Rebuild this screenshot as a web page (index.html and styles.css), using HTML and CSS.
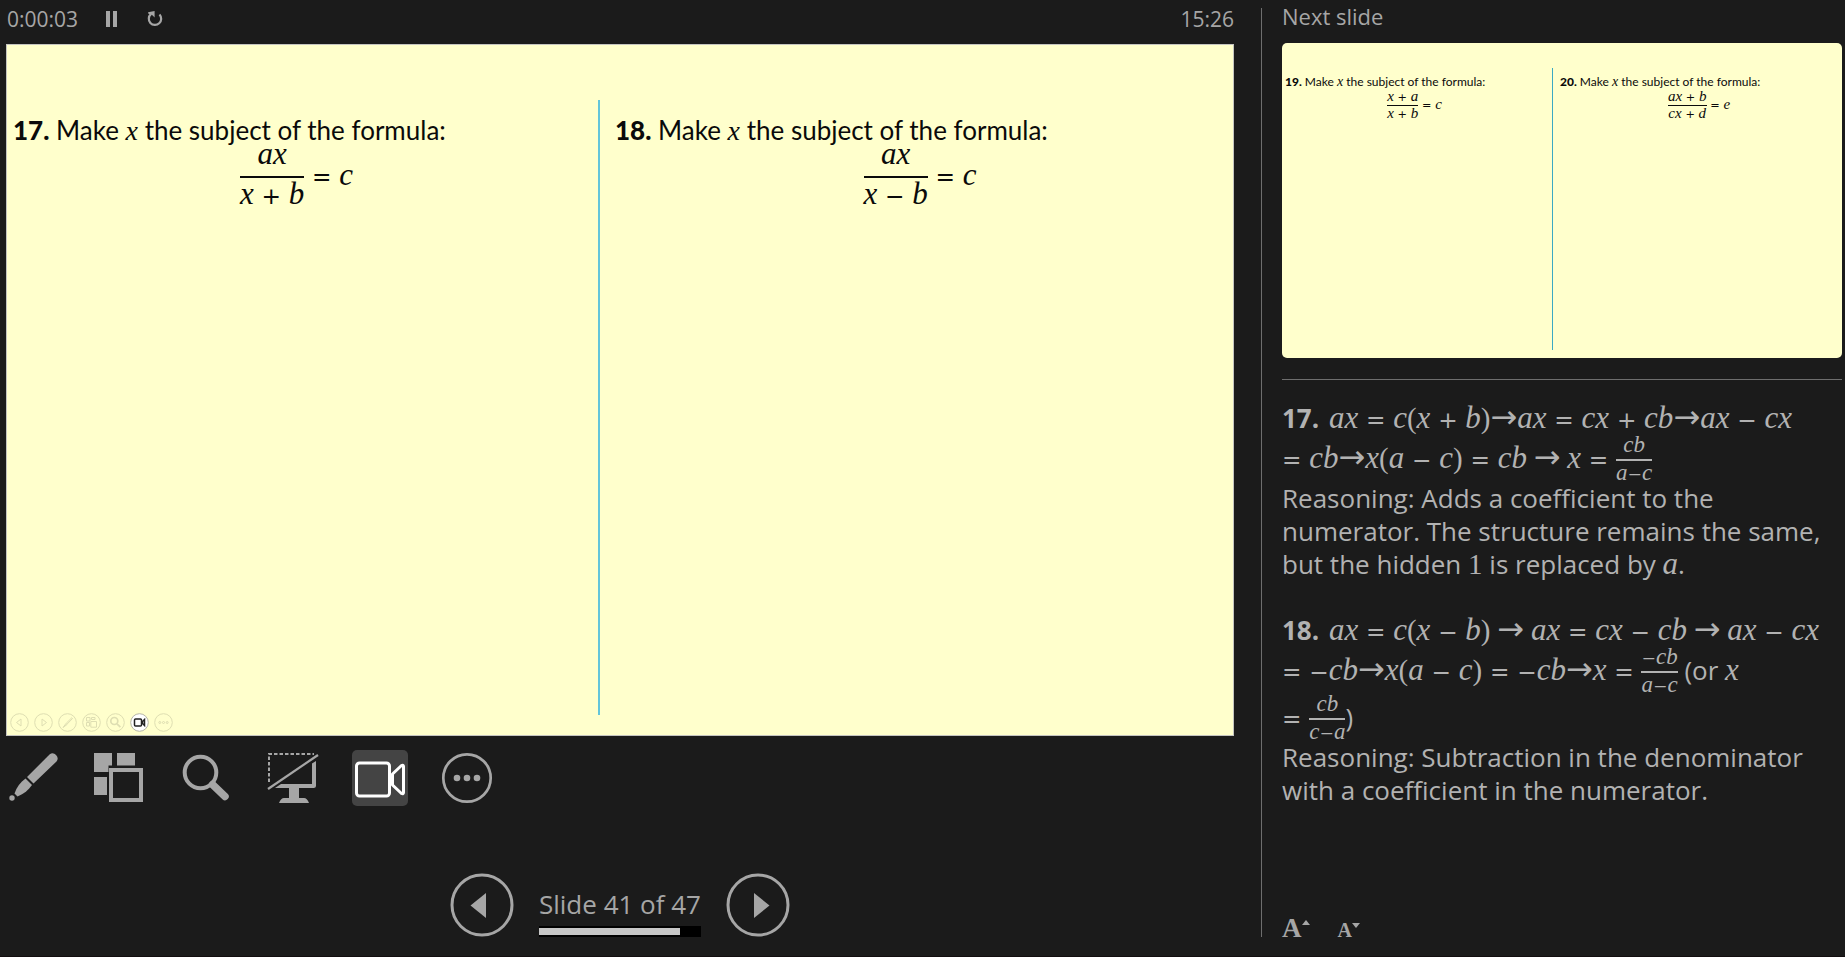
FILE: index.html
```html
<!DOCTYPE html>
<html lang="en">
<head>
<meta charset="utf-8">
<title>Presenter view</title>
<link rel="stylesheet" href="styles.css">
</head>
<body>
<div class="presenter">
  <main class="stage">
    <header class="timer-bar">
      <span class="timer">0:00:03</span>
      <button class="timer-btn" aria-label="Pause timer"><svg width="16" height="18" viewBox="0 0 16 18"><path d="M2 1h4v16H2zM9 1h4v16H9z" fill="#a6a6a6"/></svg></button>
      <button class="timer-btn" aria-label="Restart timer"><svg width="18" height="18" viewBox="0 0 18 18"><path d="M13.500 4.500a6.200 6.200 0 1 1-8.600-.4" fill="none" stroke="#a6a6a6" stroke-width="2.200"/><path d="M2 2.200 8.600 1v6.600L6.400 5.200 2.600 4z" fill="#a6a6a6"/></svg></button>
      <time class="clock">15:26</time>
    </header>

    <section class="slide" aria-label="Current slide">
      <div class="question">
        <p class="prompt"><b>17.</b> Make <i>x</i> the subject of the formula:</p>
        <p class="equation"><span class="frac"><span class="num">ax</span><span class="den">x <em>+</em> b</span></span> <em>=</em> c</p>
      </div>
      <div class="question second">
        <p class="prompt"><b>18.</b> Make <i>x</i> the subject of the formula:</p>
        <p class="equation"><span class="frac"><span class="num">ax</span><span class="den">x <em>−</em> b</span></span> <em>=</em> c</p>
      </div>
      <div class="slide-controls">
        <button aria-label="Previous"><svg viewBox="0 0 19 19"><circle cx="9.500" cy="9.500" r="8.800"/><path d="M11 6v7L6.500 9.500z"/></svg></button>
        <button aria-label="Next"><svg viewBox="0 0 19 19"><circle cx="9.500" cy="9.500" r="8.800"/><path d="M8 6v7l4.500-3.500z"/></svg></button>
        <button aria-label="Pen"><svg viewBox="0 0 19 19"><circle cx="9.500" cy="9.500" r="8.800"/><path d="M14 4.500 8.200 10.300M14.800 5.200 9 11.200M8 10.500l1 1-4 3z"/></svg></button>
        <button aria-label="All slides"><svg viewBox="0 0 19 19"><circle cx="9.500" cy="9.500" r="8.800"/><path d="M4.500 4.500h3.500v3.500h-3.500zM9.500 4.500h3.500v2h-3.500zM4.500 9.500h3v3.500h-3zM8.800 8.500h5.700v5.700h-5.700z"/></svg></button>
        <button aria-label="Zoom"><svg viewBox="0 0 19 19"><circle cx="9.500" cy="9.500" r="8.800"/><g stroke-width="1.700"><circle cx="8.300" cy="8" r="3.500"/><path d="m11 10.800 3.400 3.400"/></g></svg></button>
        <button class="on" aria-label="Camera"><svg viewBox="0 0 19 19"><circle cx="9.500" cy="9.500" r="8.800"/><g><rect x="4.500" y="6" width="7" height="7" rx="1"/><path d="M12.500 8.500 14.500 6.500v6L12.500 10.500z"/></g></svg></button>
        <button aria-label="More"><svg viewBox="0 0 19 19"><circle cx="9.500" cy="9.500" r="8.800"/><circle cx="5.800" cy="9.500" r="1"/><circle cx="9.500" cy="9.500" r="1"/><circle cx="13.200" cy="9.500" r="1"/></svg></button>
      </div>
    </section>

    <div class="tools">
      <button class="tool" aria-label="Pen and laser pointer tools"><svg viewBox="0 0 56 56"><g fill="#a6a6a6"><path d="M45.500 4.500a5 5 0 0 1 7 7L29.500 33.500 23 27z"/><path d="M21.500 28.500 28 35c-3.500 5-8 9-14.500 11.500L10.500 43.500C12.500 37 16.500 32 21.500 28.500z"/><circle cx="8" cy="48" r="2.700"/></g></svg></button>
      <button class="tool" aria-label="See all slides"><svg viewBox="0 0 56 56"><path d="M3 3h18v12.500h-3.500V22H3zM26 3h18v12.500H26zM3 27h13v18H3z" fill="#a6a6a6"/><path d="M20 20h30v30H20z" fill="none" stroke="#a6a6a6" stroke-width="4"/></svg></button>
      <button class="tool" aria-label="Zoom into the slide"><svg viewBox="0 0 56 56"><g fill="none" stroke="#a6a6a6"><circle cx="22.500" cy="22.500" r="15.800" stroke-width="4"/><path d="m34.500 34.500 12.500 12" stroke-width="7.500" stroke-linecap="round"/></g></svg></button>
      <button class="tool" aria-label="Black or unblack slide show"><svg viewBox="0 0 56 56"><path d="M4 32V4h45" fill="none" stroke="#a6a6a6" stroke-width="2" stroke-dasharray="3.500 2"/><path d="M3 39 53 5" stroke="#a6a6a6" stroke-width="2.200"/><path d="M51 11v24.500q0 2.500-2.500 2.500H34v10h5q3 0 5 5H14q2-5 5-5h5V38H10l6-4h31V13.500z" fill="#a6a6a6"/></svg></button>
      <button class="tool active" aria-label="Toggle camera"><svg viewBox="0 0 56 56"><g fill="none" stroke="#fff" stroke-width="3" stroke-linejoin="round"><rect x="4.500" y="13" width="33" height="33" rx="3"/><path d="M40.500 24v11l9 8.500q2 1 2-1v-26q0-2-2-1z"/></g></svg></button>
      <button class="tool" aria-label="More slide show options"><svg viewBox="0 0 56 56"><circle cx="28" cy="28" r="23.700" fill="none" stroke="#a6a6a6" stroke-width="2.700"/><g fill="#a6a6a6"><circle cx="18" cy="28" r="3.300"/><circle cx="28" cy="28" r="3.300"/><circle cx="38" cy="28" r="3.300"/></g></svg></button>
    </div>

    <nav class="pager" aria-label="Slides">
      <button class="round" aria-label="Previous slide"><svg viewBox="0 0 64 64"><circle cx="32" cy="32" r="30" fill="none" stroke="#a6a6a6" stroke-width="3"/><path d="M36 20v25L20.500 32.500z" fill="#a6a6a6"/></svg></button>
      <div class="position">
        <span class="count">Slide 41 of 47</span>
        <div class="track"><div class="fill" style="width:87.2%"></div></div>
      </div>
      <button class="round" aria-label="Next slide"><svg viewBox="0 0 64 64"><circle cx="32" cy="32" r="30" fill="none" stroke="#a6a6a6" stroke-width="3"/><path d="M28 20v25l15.500-12.500z" fill="#a6a6a6"/></svg></button>
    </nav>
  </main>

  <aside class="side">
    <h2 class="side-title">Next slide</h2>
    <section class="slide preview" aria-label="Next slide preview">
      <div class="question">
        <p class="prompt"><b>19.</b> Make <i>x</i> the subject of the formula:</p>
        <p class="equation"><span class="frac"><span class="num">x <em>+</em> a</span><span class="den">x <em>+</em> b</span></span> <em>=</em> c</p>
      </div>
      <div class="question second">
        <p class="prompt"><b>20.</b> Make <i>x</i> the subject of the formula:</p>
        <p class="equation"><span class="frac"><span class="num">ax <em>+</em> b</span><span class="den">cx <em>+</em> d</span></span> <em>=</em> e</p>
      </div>
    </section>
    <section class="notes" aria-label="Notes">
      <p><b>17.</b> <i>ax <em>=</em> c<span class="up">(</span>x <em>+</em> b<span class="up">)</span></i><span class="arrow">→</span><i>ax <em>=</em> cx <em>+</em> cb</i><span class="arrow">→</span><i>ax <em>−</em> cx</i></p>
      <p class="tall"><i><em>=</em> cb</i><span class="arrow">→</span><i>x<span class="up">(</span>a <em>−</em> c<span class="up">)</span> <em>=</em> cb</i> <span class="arrow">→</span> <i>x <em>=</em> <span class="frac"><span class="num">cb</span><span class="den">a<em>−</em>c</span></span></i></p>
      <p>Reasoning: Adds a coefficient to the<br>numerator. The structure remains the same,<br>but the hidden <i class="up">1</i> is replaced by <i>a</i>.</p>
      <p class="gap"><b>18.</b> <i>ax <em>=</em> c<span class="up">(</span>x <em>−</em> b<span class="up">)</span></i> <span class="arrow">→</span> <i>ax <em>=</em> cx <em>−</em> cb</i> <span class="arrow">→</span> <i>ax <em>−</em> cx</i></p>
      <p class="tall"><i><em>=</em> <em>−</em>cb</i><span class="arrow">→</span><i>x<span class="up">(</span>a <em>−</em> c<span class="up">)</span> <em>=</em> <em>−</em>cb</i><span class="arrow">→</span><i>x <em>=</em> <span class="frac"><span class="num"><em>−</em>cb</span><span class="den">a<em>−</em>c</span></span></i> (or <i>x</i></p>
      <p class="tall"><i><em>=</em> <span class="frac"><span class="num">cb</span><span class="den">c<em>−</em>a</span></span></i>)</p>
      <p>Reasoning: Subtraction in the denominator<br>with a coefficient in the numerator.</p>
    </section>
    <div class="text-size">
      <button class="larger" aria-label="Make the text larger"><span>A</span><svg width="8" height="5" viewBox="0 0 8 5"><path d="M0 5 4 0l4 5z" fill="#a6a6a6"/></svg></button>
      <button class="smaller" aria-label="Make the text smaller"><span>A</span><svg width="8" height="5" viewBox="0 0 8 5"><path d="M0 0h8L4 5z" fill="#a6a6a6"/></svg></button>
    </div>
  </aside>
</div>
</body>
</html>
```

FILE: styles.css
```css
* { box-sizing: border-box; }

body {
  margin: 0;
  background: #1b1b1b;
  color: #a6a6a6;
  font-family: "Open Sans", "Noto Sans", sans-serif;
}

p, h2 { margin: 0; }

button {
  padding: 0;
  border: 0;
  background: none;
  color: inherit;
  cursor: pointer;
}

svg { display: block; }

.presenter {
  display: grid;
  grid-template-columns: 1261fr 584fr;
  min-height: 100vh;
  border-bottom: 1px solid #120d0f;
}

.stage {
  display: flex;
  flex-direction: column;
  padding: 0 27px 19px 6px;
}

/* Timer row */
.timer-bar {
  display: flex;
  align-items: center;
  height: 44px;
  padding: 0 0 6px 1px;
  font-size: 21px;
}
.timer { margin-right: 26px; }
.timer-btn { margin-right: 26px; }
.clock { margin-left: auto; }

/* Slides */
.slide {
  position: relative;
  display: grid;
  grid-template-columns: 592fr 636fr;
  aspect-ratio: 1228 / 692;
  padding: 55px 0 20px;
  border: 1px solid #c4c4c0;
  background: #ffffcc;
  color: #0a0a0a;
}
.question { padding: 14px 18px 0 6px; }
.question.second {
  border-left: 2px solid #63c5da;
  padding: 14px 8px 0 15px;
}
.prompt {
  font: 26px/32px Lato, sans-serif;
  white-space: nowrap;
}
.prompt b { font-weight: 900; }
.prompt i, .equation, .notes i {
  font-family: "Liberation Serif", serif;
  font-style: italic;
}
.prompt i { font-size: 28px; line-height: 28px; }
.equation {
  margin-top: -6px;
  font-size: 31px;
  line-height: 28px;
  text-align: center;
}

/* Operators are upright and heavier than the letters */
em {
  font-family: "DejaVu Sans", sans-serif;
  font-size: 0.75em;
  font-style: normal;
  line-height: 1;
}
.up, .notes i.up { font-style: normal; }

.frac {
  display: inline-flex;
  flex-direction: column;
  text-align: center;
  vertical-align: middle;
}
.num { padding-bottom: 8px; }
.den { padding: 2px 0 8px; border-top: 2px solid currentColor; }

.slide-controls {
  position: absolute;
  left: 3px;
  bottom: 3px;
  display: flex;
  gap: 5px;
}
.slide-controls svg {
  width: 19px;
  height: 19px;
  fill: none;
  stroke: #dedeb2;
}
.slide-controls .on svg { fill: #fff; stroke: #b5b5a8; }
.slide-controls .on g { stroke: #222; stroke-width: 1.5; }

/* Tool row */
.tools {
  display: flex;
  gap: 31px;
  margin-left: -2px;
  padding-top: 14px;
}
.tool { width: 56px; height: 56px; }
.active { border-radius: 5px; background: #444; }

/* Slide navigation */
.pager {
  display: flex;
  justify-content: center;
  gap: 25px;
  margin-top: auto;
}
.round { width: 64px; height: 64px; }
.position {
  display: flex;
  flex-direction: column;
  justify-content: flex-end;
}
.count {
  font-size: 26px;
  line-height: 36px;
  padding-bottom: 4px;
}
.track { padding: 2px 0; background: #000; }
.fill { height: 7px; background: #c6c6c6; }

/* Side pane */
.side {
  display: flex;
  flex-direction: column;
  margin: 8px 0 19px;
  padding: 0 3px 0 20px;
  border-left: 1px solid #6e6e6e;
}
.side-title {
  height: 35px;
  font-size: 22px;
  font-weight: 400;
  line-height: 16px;
}

.preview {
  grid-template-columns: 270fr 290fr;
  aspect-ratio: 560 / 315;
  padding: 25px 0 8px;
  border: 0;
  border-radius: 5px;
}
.preview .question { padding: 6px 8px 0 3px; }
.preview .question.second {
  border-left-width: 1px;
  border-color: #3aa9c4;
  padding: 6px 4px 0 7px;
}
.preview .prompt { font-size: 12px; line-height: 15px; }
.preview .prompt i { font-size: 14px; line-height: 13px; }
.preview .equation { margin-top: 0; font-size: 15px; line-height: 14px; }
.preview .num { padding-bottom: 2px; }
.preview .den { padding: 0 0 2px; border-top-width: 1px; }

.notes {
  margin-top: 21px;
  padding-top: 22px;
  border-top: 1px solid #6e6e6e;
  color: #b2b2b2;
  font-size: 26px;
  line-height: 33px;
}
.notes p { white-space: nowrap; }
.notes b { margin-right: 3px; }
.notes i { font-size: 31px; line-height: 32px; }
.notes .up { font-size: 29px; }
.notes .tall { height: 47px; line-height: 47px; }
.notes .tall i { line-height: 46px; }
.notes .gap { margin-top: 33px; }
.notes .frac {
  font-size: 23px;
  line-height: 20px;
}
.notes .num { padding-bottom: 4px; }
.notes .den { padding: 2px 0 3px; }
.arrow {
  font-family: "DejaVu Sans", sans-serif;
  font-size: 32px;
  line-height: 30px;
}

.text-size {
  display: flex;
  align-items: flex-end;
  gap: 28px;
  margin-top: auto;
}
.text-size button {
  display: flex;
  font-family: "Liberation Serif", serif;
  font-weight: 700;
}
.larger { font-size: 27px; line-height: 17px; }
.smaller { font-size: 20px; line-height: 14px; }
```
